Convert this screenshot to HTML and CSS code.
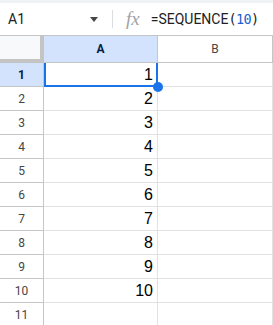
FILE: index.html
```html
<!DOCTYPE html>
<html lang="en">
  <head>
    <meta charset="UTF-8" />
    <meta name="viewport" content="width=device-width, initial-scale=1.0" />
    <title>Sheet</title>
    <link rel="stylesheet" href="styles.css">
  </head>
  <body>
    <!-- Formula bar -->
    <div class="formula-bar">
      <div class="name-box">
        <span class="cell-ref">A1</span>
        <svg class="caret" width="8" height="5" viewBox="0 0 8 5"><path d="M0 0h8L4 5z" fill="#444746"/></svg>
      </div>
      <div class="divider"></div>
      <span class="fx">fx</span>
      <div class="formula">=SEQUENCE<span class="mono">(<span class="num">10</span>)</span></div>
    </div>

    <!-- Grid -->
    <div class="sheet">
      <div class="row header-row">
        <div class="corner"></div>
        <div class="col-head active">A</div>
        <div class="col-head">B</div>
      </div>
      <div id="rows"></div>
      <div class="selection"><div class="handle"></div></div>
    </div>

    <script>
      const rows = document.getElementById("rows");
      for (let i = 1; i <= 11; i++) {
        const row = document.createElement("div");
        row.className = "row";
        row.innerHTML = `
          <div class="row-head${i === 1 ? " active" : ""}">${i}</div>
          <div class="cell num-cell">${i <= 10 ? i : ""}</div>
          <div class="cell"></div>
        `;
        rows.appendChild(row);
      }
    </script>
  </body>
</html>
```

FILE: styles.css
```css
body {
  margin: 0;
  font-family: Roboto, "Liberation Sans", Arial, sans-serif;
  color: #202124;
  background-color: #fff;
  overflow: hidden;
}
.formula-bar {
  display: flex;
  align-items: center;
  height: 32px;
  border-top: 3px solid #f0f2f3;
  border-bottom: 1px solid #c4c7c5;
}
.name-box {
  display: flex;
  align-items: center;
  justify-content: space-between;
  width: 90px;
  padding-left: 8px;
  padding-right: 14px;
  box-sizing: content-box;
}
.cell-ref {
  font-size: 14px;
}
.divider {
  width: 1px;
  height: 18px;
  background-color: #dadce0;
}
.fx {
  margin-left: 13px;
  font-family: "Liberation Serif", serif;
  font-style: italic;
  font-size: 19px;
  color: #a0a3a6;
}
.formula {
  margin-left: 11px;
  font-size: 14px;
}
.mono {
  font-family: "DejaVu Sans Mono", monospace;
  font-size: 13.5px;
  letter-spacing: -0.6px;
}
.num {
  color: #1a5fcf;
}
.sheet {
  position: relative;
}
.row {
  display: grid;
  grid-template-columns: 44px 114px 1fr;
  height: 24px;
}
.header-row {
  height: 27px;
}
.corner {
  background-color: #f8f9fa;
  border-right: 4px solid #c4c4c4;
  border-bottom: 4px solid #c4c4c4;
}
.col-head {
  display: flex;
  align-items: center;
  justify-content: center;
  font-size: 12px;
  color: #444746;
  border-right: 1px solid #c4c7c5;
  border-bottom: 1px solid #c4c7c5;
}
.col-head.active {
  background-color: #d3e3fd;
  color: #041e49;
  font-weight: bold;
}
.row-head {
  display: flex;
  align-items: center;
  justify-content: center;
  font-size: 12px;
  color: #444746;
  border-right: 1px solid #c4c7c5;
  border-bottom: 1px solid #c4c7c5;
}
.row-head.active {
  background-color: #d3e3fd;
  color: #041e49;
  font-weight: bold;
}
.cell {
  display: flex;
  align-items: flex-end;
  justify-content: flex-end;
  padding: 0 4px 2px 0;
  font-family: "Liberation Sans", Arial, sans-serif;
  font-size: 16px;
  color: #000;
  border-right: 1px solid #e1e1e1;
  border-bottom: 1px solid #e1e1e1;
}
.selection {
  position: absolute;
  left: 44px;
  top: 27px;
  width: 110px;
  height: 22px;
  border: 2px solid #1a73e8;
  border-top: none;
}
.handle {
  position: absolute;
  right: -7px;
  bottom: -7px;
  width: 10px;
  height: 10px;
  border-radius: 50%;
  background-color: #1a73e8;
}
```
